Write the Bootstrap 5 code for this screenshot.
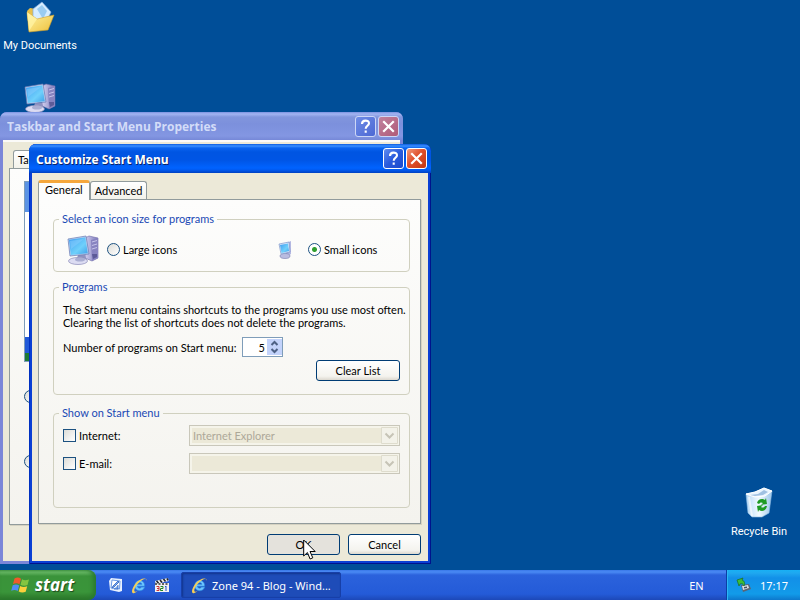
<!DOCTYPE html>
<html lang="en">
<head>
<meta charset="utf-8">
<meta name="viewport" content="width=device-width, initial-scale=1">
<title>Customize Start Menu</title>
<link href="https://cdn.jsdelivr.net/npm/bootstrap@5.3.0/dist/css/bootstrap.min.css" rel="stylesheet">
<style>
:root { --ui: Lato, "Liberation Sans", Arial, sans-serif; --shell: "Noto Sans", Tahoma, sans-serif; --caption: "Open Sans", "Trebuchet MS", sans-serif; }
body { background: #004e98; font-family: var(--ui); font-size: 11px; line-height: 13px; color: #000; }
svg { display: block; flex: none; }
button, input, select { font-family: inherit; }
.desk-icon { position: absolute; width: 80px; color: #fff; font-family: Roboto, Tahoma, sans-serif; font-size: 11px; line-height: 14px; text-decoration: none; gap: 6px; }
.at-docs { left: 0; top: 1px; }
.at-computer { left: 0; top: 82px; }
.at-recycle { right: 1px; bottom: 61px; }

/* windows */
.win { position: absolute; border-radius: 7px 7px 0 0; overflow: hidden; }
.win-back { left: 0; top: 112px; width: 403px; bottom: 36px; background: #7b86d8; }
.win-front { left: 29px; top: 144px; width: 402px; background: #0a3fd4; box-shadow: inset 1px 0 #0030c0, inset -1px -1px #00138c; }
.caption-bar { height: 29px; gap: 2px; padding: 0 4px 0 7px; color: #fff; font: 700 12px/28px var(--caption); background: linear-gradient(#0a5be0 0, #3b90ff 2px, #0a64f0 4px, #0055e2 8px, #0055e5 16px, #0063ff 24px, #005af0 26px, #0040c0 100%); text-shadow: 1px 1px #0a246a; }
.caption-bar span { padding-top: 2px; }
.win-back .caption-bar { height: 28px; color: #d3dcf8; text-shadow: none; background: linear-gradient(#7b91e0 0, #a3b5f2 2px, #8296dd 5px, #7c90dc 12px, #8396e2 24px, #7688d8 100%); }
.cap-btn { width: 21px; height: 21px; padding: 0; border: 1px solid #fff; border-radius: 3px; background: linear-gradient(135deg, #5f8cf0, #2a5bdc 50%, #1c4acb); }
.cap-btn.shut { background: linear-gradient(135deg, #f09a7c, #e0502c 45%, #c43812); }
.win-back .cap-btn { border-color: #cdd7f6; background: linear-gradient(135deg, #6f8ce6, #4c68d4); }
.win-back .cap-btn.shut { background: linear-gradient(135deg, #c0829e, #b05a78); }
.win-body { background: #ece9d8; margin: 0 3px 3px; }
.win-front .win-body { padding: 7px 7px 6px 6px; }
.win-back .win-body { padding: 8px 6px 0; border-top: 2px solid #fbfaf8; min-height: 421px; }

/* tabs */
.tab { border: 1px solid #919b9c; border-bottom: 0; border-radius: 3px 3px 0 0; background: linear-gradient(#fff, #f3f2ea); padding: 0 4px; height: 18px; font-size: 11px; line-height: 17px; color: #000; }
.tab.current { position: relative; z-index: 1; height: 20px; margin-bottom: -1px; padding: 0 6px 4px; border-top: 3px solid #f5a73c; background: #fdfdfc; line-height: 12px; }
.pane { border: 1px solid #919b9c; background: linear-gradient(#fdfdfc, #f4f3ee); box-shadow: 1px 1px #d5d2c2; }
.win-front .pane { padding: 12px 10px 15px 14px; }
.win-back .pane { padding: 12px 14px 56px; }
.view-options { gap: 52px; padding-top: 28px; }

/* group boxes */
.group { border: 1px solid #d0d0bf; border-radius: 4px; padding: 0 5px; }
.group legend { float: none; width: auto; margin: 0; padding: 0 3px; font-size: 11px; line-height: 14px; color: #1a49b4; }
.group-in { padding: 0 4px; }
.sizes { display: grid; grid-template-columns: 211px 1fr; height: 45px; padding-top: 2px; align-items: center; }
.programs { padding-top: 9px; padding-bottom: 13px; }
.shown { padding-top: 5px; padding-bottom: 33px; display: grid; gap: 7px; }
.group-gap { margin-top: 11px; }
.list-row { padding-top: 3px; }
.actions { padding-top: 10px; }
.opt { display: flex; align-items: center; gap: 3px; }
.tick { appearance: none; flex: none; width: 13px; height: 13px; margin: 0; border: 1px solid #1c5180; background: linear-gradient(135deg, #dcdcd7, #fff); }
.tick[type=radio] { border-radius: 50%; }
.tick[type=radio]:checked { background: radial-gradient(circle, #2f9e2f 0 2px, #fff 3px); }
.count-label { min-width: 179px; }
.spin { width: 41px; height: 20px; border: 1px solid #7f9db9; background: #fff; }
.spin input { width: 22px; border: 0; padding: 0; background: none; text-align: right; font-size: 11px; outline: 0; }
.spin button { width: 15px; height: 8px; padding: 0; border: 0; background: #c3d3fb; }
.push { height: 21px; border: 1px solid #003c74; border-radius: 3px; padding: 0; font-size: 11px; line-height: 18px; color: #000; background: linear-gradient(#fff, #f4f3ee 80%, #dcd8cf); }
.push.pressed { background: #e4e2dc; }
.w-list { width: 84px; }
.w-act { width: 73px; }
.combo { position: relative; width: 211px; }
.combo select { appearance: none; display: block; width: 100%; height: 21px; border: 1px solid #c9c7ba; padding: 0 3px; font-size: 11px; line-height: 17px; color: #aca899; opacity: 1; background: #ece9d8; box-shadow: inset 0 0 0 2px #f5f4ea; }
.combo svg { position: absolute; right: 2px; top: 2px; }

/* preview inside the rear window */
.preview { width: 120px; height: 181px; border: 1px solid #7f9db9; background: linear-gradient(#5b93e4 0 30px, #fff 30px 155px, #2159d8 155px 171px, #1d7a34 171px); }

/* taskbar */
.taskbar { height: 30px; color: #fff; font-family: var(--shell); background: linear-gradient(#3a78e8 0, #4a8af4 2px, #2b62dc 5px, #245bd8 24px, #1c48b8 100%); }
.start { width: 96px; border: 0; border-radius: 0 8px 8px 0; padding: 0 0 0 11px; color: #fff; font: italic 700 17px/28px var(--caption); text-shadow: 1px 1px 1px #1d4a1d; background: linear-gradient(#57a957 0, #6cbd6a 2px, #3a933a 6px, #3a953a 22px, #2a7429 100%); box-shadow: inset -3px 0 4px #2a7a2e; }
.quick { gap: 7px; padding-left: 12px; width: 85px; }
.quick a { width: 16px; }
.task { width: 160px; height: 26px; gap: 4px; border: 1px solid #173fa8; border-radius: 2px; padding: 0 9px; color: #fff; font-size: 11px; background: #1e4cb8; box-shadow: inset 1px 1px 2px #12348c; }
.tray { width: 74px; padding: 0 12px 0 9px; border-left: 1px solid #0b3fa5; font-size: 11px; background: linear-gradient(#18b0f4 0, #1fa8f0 3px, #1290e8 8px, #129be9 24px, #0d78cc 100%); box-shadow: inset 1px 0 #2bb5f5; }
.lang { width: 59px; font-size: 11px; }
.pointer { position: absolute; left: 303px; top: 539px; pointer-events: none; }
</style>
<script src="https://cdn.jsdelivr.net/npm/bootstrap@5.3.0/dist/js/bootstrap.bundle.min.js"></script>
</head>
<body>
<svg width="0" height="0" class="position-absolute" aria-hidden="true">
  <defs>
    <linearGradient id="screen" x1="0" y1="0" x2="1" y2="1"><stop offset="0" stop-color="#3f9cf0"/><stop offset=".6" stop-color="#6fd0fb"/><stop offset="1" stop-color="#3e9fe8"/></linearGradient>
    <linearGradient id="tower" x1="0" x2="1"><stop offset="0" stop-color="#d3d0f0"/><stop offset="1" stop-color="#7b78b8"/></linearGradient>
    <linearGradient id="folder" x1="0" y1="0" x2="1" y2="1"><stop offset="0" stop-color="#fff6a8"/><stop offset="1" stop-color="#eebf3a"/></linearGradient>
    <linearGradient id="bin" x1="0" x2="1"><stop offset="0" stop-color="#b4d8f6"/><stop offset=".5" stop-color="#f2faff"/><stop offset="1" stop-color="#9cc6ea"/></linearGradient>
  </defs>
  <symbol id="computer" viewBox="0 0 32 32">
    <path d="M18 4l4-2 9 2v20l-6 3-7-3z" fill="url(#tower)" stroke="#6d6aa6" stroke-width=".6"/>
    <path d="M24 6l7-2v20l-6 3z" fill="#8783c0"/>
    <path d="M25 8l5-1.500m-5 5l5-1.500m-5 5l5-1.500" stroke="#c6c4ea" stroke-width="1"/>
    <path d="M25 20h5v3l-4 2z" fill="#5d5b98"/>
    <path d="M11 21h7l2 6H9z" fill="#8f92c0"/>
    <ellipse cx="11" cy="27" rx="9.500" ry="3.500" fill="#dcdcf2" stroke="#8a8ab8" stroke-width=".7"/>
    <ellipse cx="13" cy="25.500" rx="5" ry="2" fill="#aaaed2"/>
    <path d="M1 5l18-3 3 18-19 2z" fill="#c3d3f0" stroke="#6478b3" stroke-width=".7"/>
    <path d="M2 5.800l16.300-2.600 2.500 16L3.800 21z" fill="url(#screen)"/>
    <path d="M3 7l14-2-13 10z" fill="#8fd0ff" opacity=".45"/>
  </symbol>
  <symbol id="ie" viewBox="0 0 16 16">
    <path d="M12.800 8.700H6c.1 2 3 2.400 4 .8h3c-1.500 5-9.500 4.500-9.500-1.300 0-6.400 9.800-6.700 9.300.5zM10.200 6.900c-.2-2-3.700-1.900-4.100 0z" fill="#6cc4ff" stroke="#2a86dc" stroke-width=".6"/>
    <path d="M15 3.500C14.500-.3 8 1.500 4 6.500 1 10.500 0 14.500 2 15.200c1 .3 2.500-.5 4-1.700-2.500 1-3.500.3-2.500-2.700C5 6.500 12 .5 14 2.200z" fill="#f7cf56"/>
  </symbol>
  <symbol id="help" viewBox="0 0 19 19"><path d="M6 7c0-4.500 7-4.300 7-.8 0 2.500-3.300 2.800-3.300 5.600M9.700 13.500v2.200" fill="none" stroke="#fff" stroke-width="2.100"/></symbol>
  <symbol id="cross" viewBox="0 0 19 19"><path d="M5 5l9 9M14 5l-9 9" stroke="#fff" stroke-width="2.200" stroke-linecap="square"/></symbol>
  <symbol id="drop" viewBox="0 0 17 17"><rect width="17" height="17" rx="1.500" fill="#f3f2e9"/><path d="M.5.500h16v16H.5z" fill="none" stroke="#dedccd"/><path d="M4.500 6.500l4 4 4-4" fill="none" stroke="#c6c4b6" stroke-width="2"/></symbol>
</svg>

<div class="d-flex flex-column vh-100 overflow-hidden position-relative">
  <main class="flex-grow-1">
    <a href="#" class="desk-icon at-docs d-flex flex-column align-items-center">
      <svg width="32" height="32" viewBox="0 0 32 32"><path d="M3 10l3-3 6 1 12 2v18L5 30z" fill="#e9c04a"/><path d="M9 8L18 1l9 10-6 13-12-4z" fill="#d7edff" stroke="#7da9db" stroke-width=".7"/><path d="M13 8l5-4 5 6-4 8z" fill="#9accf2"/><path d="M3 11l10 7 17-4-6 15-19 2z" fill="url(#folder)" stroke="#d29f28" stroke-width=".6"/><path d="M5 30l8-12-10-7z" fill="#fff3a2" opacity=".8"/></svg>
      <span>My Documents</span>
    </a>
    <a href="#" class="desk-icon at-computer d-flex flex-column align-items-center" aria-label="Computer"><svg width="32" height="32"><use href="#computer"/></svg></a>
    <a href="#" class="desk-icon at-recycle d-flex flex-column align-items-center">
      <svg width="32" height="32" viewBox="0 0 32 32"><path d="M3 7l9-2 9-4 8 3-3 22-7 4H9l-4-4z" fill="url(#bin)" stroke="#8fbce4" stroke-width=".6"/><path d="M3 7l9-2 9-4 8 3-7 5-10 1z" fill="#e9f5ff" stroke="#fff"/><path d="M7 8l8-1 6-4 4 2-5 3-8 1z" fill="#6f9fcf" opacity=".6"/><path d="M6 10l3 19" stroke="#fff" opacity=".6" stroke-width="2"/><g fill="#1f9b24"><path d="M14 16c1-4 5-5 8-3l1-2 1 6-6 1 2-2c-2-1-3-.5-4 1z"/><path d="M24 19c-1 5-5 6-8 4l-1 2-1-6 6-1-2 2c2 1 3 .5 4-1z"/></g></svg>
      <span>Recycle Bin</span>
    </a>

    <section class="win win-back" aria-label="Taskbar and Start Menu Properties">
      <header class="caption-bar d-flex align-items-center">
        <span class="me-auto">Taskbar and Start Menu Properties</span>
        <button class="cap-btn" type="button" aria-label="Help"><svg width="19" height="19"><use href="#help"/></svg></button>
        <button class="cap-btn shut" type="button" aria-label="Close"><svg width="19" height="19"><use href="#cross"/></svg></button>
      </header>
      <div class="win-body">
        <div class="d-flex px-1"><button type="button" class="tab">Ta</button></div>
        <div class="pane">
          <div class="preview"></div>
          <div class="view-options d-flex flex-column">
            <input class="tick" type="radio" name="view" aria-label="First view">
            <input class="tick" type="radio" name="view" aria-label="Second view">
          </div>
        </div>
      </div>
    </section>

    <section class="win win-front" role="dialog" aria-label="Customize Start Menu">
      <header class="caption-bar d-flex align-items-center">
        <span class="me-auto">Customize Start Menu</span>
        <button class="cap-btn" type="button" aria-label="Help"><svg width="19" height="19"><use href="#help"/></svg></button>
        <button class="cap-btn shut" type="button" aria-label="Close"><svg width="19" height="19"><use href="#cross"/></svg></button>
      </header>
      <div class="win-body">
        <div class="d-flex align-items-end">
          <button type="button" class="tab current">General</button>
          <button type="button" class="tab">Advanced</button>
        </div>
        <div class="pane">
          <fieldset class="group">
            <legend>Select an icon size for programs</legend>
            <div class="group-in sizes">
              <div class="d-flex align-items-center gap-2 ps-1">
                <svg width="32" height="32"><use href="#computer"/></svg>
                <label class="opt"><input class="tick" type="radio" name="size">Large icons</label>
              </div>
              <div class="d-flex align-items-center gap-3 ps-1">
                <svg width="14" height="18" viewBox="0 0 14 18"><path d="M8 2l5-2v13l-5 3z" fill="#b4b8e2"/><ellipse cx="7" cy="15" rx="5" ry="2.500" fill="#b9bce0" stroke="#7478ab" stroke-width=".6"/><path d="M1 3l10-2 1 10-9 2z" fill="#dbe7fa" stroke="#6f8ac2" stroke-width=".6"/><path d="M2 4l8-1.500 1 7.500-7.500 2z" fill="url(#screen)"/></svg>
                <label class="opt"><input class="tick" type="radio" name="size" checked>Small icons</label>
              </div>
            </div>
          </fieldset>

          <fieldset class="group mt-2">
            <legend>Programs</legend>
            <div class="group-in programs">
              <div class="text-nowrap">The Start menu contains shortcuts to the programs you use most often.<br>Clearing the list of shortcuts does not delete the programs.</div>
              <div class="d-flex align-items-center mt-2">
                <label for="count" class="count-label">Number of programs on Start menu:</label>
                <div class="spin d-flex align-items-center">
                  <input id="count" type="text" value="5">
                  <div class="d-flex flex-column ms-auto">
                    <button type="button" aria-label="More"><svg width="15" height="8" viewBox="0 0 15 8"><path d="M4.500 6l3-3 3 3" fill="none" stroke="#4d6185" stroke-width="2"/></svg></button>
                    <button type="button" aria-label="Fewer"><svg width="15" height="8" viewBox="0 0 15 8"><path d="M4.500 2l3 3 3-3" fill="none" stroke="#4d6185" stroke-width="2"/></svg></button>
                  </div>
                </div>
              </div>
              <div class="list-row d-flex justify-content-end"><button type="button" class="push w-list">Clear List</button></div>
            </div>
          </fieldset>

          <fieldset class="group group-gap">
            <legend>Show on Start menu</legend>
            <div class="group-in shown">
              <div class="d-flex align-items-center justify-content-between">
                <label class="opt"><input class="tick" type="checkbox">Internet:</label>
                <div class="combo"><select disabled aria-label="Internet program"><option>Internet Explorer</option></select><svg width="17" height="17"><use href="#drop"/></svg></div>
              </div>
              <div class="d-flex align-items-center justify-content-between">
                <label class="opt"><input class="tick" type="checkbox">E-mail:</label>
                <div class="combo"><select disabled aria-label="E-mail program"><option></option></select><svg width="17" height="17"><use href="#drop"/></svg></div>
              </div>
            </div>
          </fieldset>
        </div>
        <div class="actions d-flex justify-content-end gap-2">
          <button type="button" class="push w-act pressed">OK</button>
          <button type="button" class="push w-act">Cancel</button>
        </div>
      </div>
    </section>
  </main>

  <footer class="taskbar d-flex align-items-stretch">
    <button type="button" class="start d-flex align-items-center gap-1">
      <svg width="20" height="20" viewBox="0 0 20 20"><path d="M3.500 3.500C6 2 8 2.500 10 3.700L8.500 9.300C6.500 8 4.500 8 2 9z" fill="#f0592b"/><path d="M11 4.200c2 1.200 4 1.300 7 .2L16.500 10c-2.500 1-5 .8-7-.3z" fill="#84c541"/><path d="M1.700 10.200c2.500-1.200 4.500-1 6.500.2l-1.500 5.500c-2-1.200-4-1.300-6.500-.2z" fill="#4f8df5"/><path d="M9.200 11c2 1.200 4.300 1.300 7 .3l-1.500 5.500c-2.500 1-5 .8-7-.3z" fill="#fcd03c"/></svg>
      <span>start</span>
    </button>
    <nav class="quick d-flex align-items-center" aria-label="Quick launch">
      <a href="#" aria-label="Show desktop"><svg width="16" height="16" viewBox="0 0 16 16"><path d="M3 1l11 1v12l-3 1-9-2-1-9z" fill="#e8f1ff"/><path d="M4 3l8 1-.5 8L3 11z" fill="#fff" stroke="#6c9be6"/><path d="M5 9l5-5 1 1-5 5-2 1zM10 8v4H6" fill="#79a9ee" stroke="#2c5ebe" stroke-width=".8"/></svg></a>
      <a href="#" aria-label="Internet Explorer"><svg width="17" height="17"><use href="#ie"/></svg></a>
      <a href="#" aria-label="Media player"><svg width="16" height="16" viewBox="0 0 16 16"><path d="M1 4l13-3 .7 3L1.700 7zM1 6h14v9H1z" fill="#f1f1f1"/><path d="M2.500 3.700l2 2.500M6 2.900l2 2.500M9.500 2l2 2.600M13 1.300l1 2" stroke="#20242c" stroke-width="1.600"/><path d="M1 7h14" stroke="#333" stroke-dasharray="2 1.500" stroke-width="1.500"/><path d="M2.500 9.500H5v4H2.500M3 11.500h2" fill="none" stroke="#c33"/><path d="M6.500 9.500H9v2H6.500v2H9" fill="none" stroke="#282"/><path d="M11 10l1-1v5" fill="none" stroke="#25c"/></svg></a>
    </nav>
    <button type="button" class="task d-flex align-items-center align-self-center"><svg width="17" height="17"><use href="#ie"/></svg><span>Zone 94 - Blog - Wind...</span></button>
    <span class="ms-auto d-flex align-items-center justify-content-center lang">EN</span>
    <div class="tray d-flex align-items-center justify-content-between">
      <svg width="15" height="16" viewBox="0 0 15 16"><path d="M5 8l8-1 2 5-8 3z" fill="#5c6472"/><path d="M6 9l6-1 1 3-6 2z" fill="#d8dde4"/><path d="M8 10l3-.5v1.500l-3 .6z" fill="#49525f"/><path d="M1 3l6-2-1 2c3 1 3 4 2 6-1-2-2-3-4-2L3 9z" fill="#3ebd36" stroke="#1b6e1d" stroke-width=".7"/></svg>
      <span>17:17</span>
    </div>
  </footer>
  <svg class="pointer" width="14" height="22" viewBox="0 0 14 22" aria-hidden="true"><path d="M.7 1v16l3.700-3.500 2.700 6.500 2.700-1.200L7 12.500h5.200z" fill="#fff" stroke="#000"/></svg>
</div>
</body>
</html>
